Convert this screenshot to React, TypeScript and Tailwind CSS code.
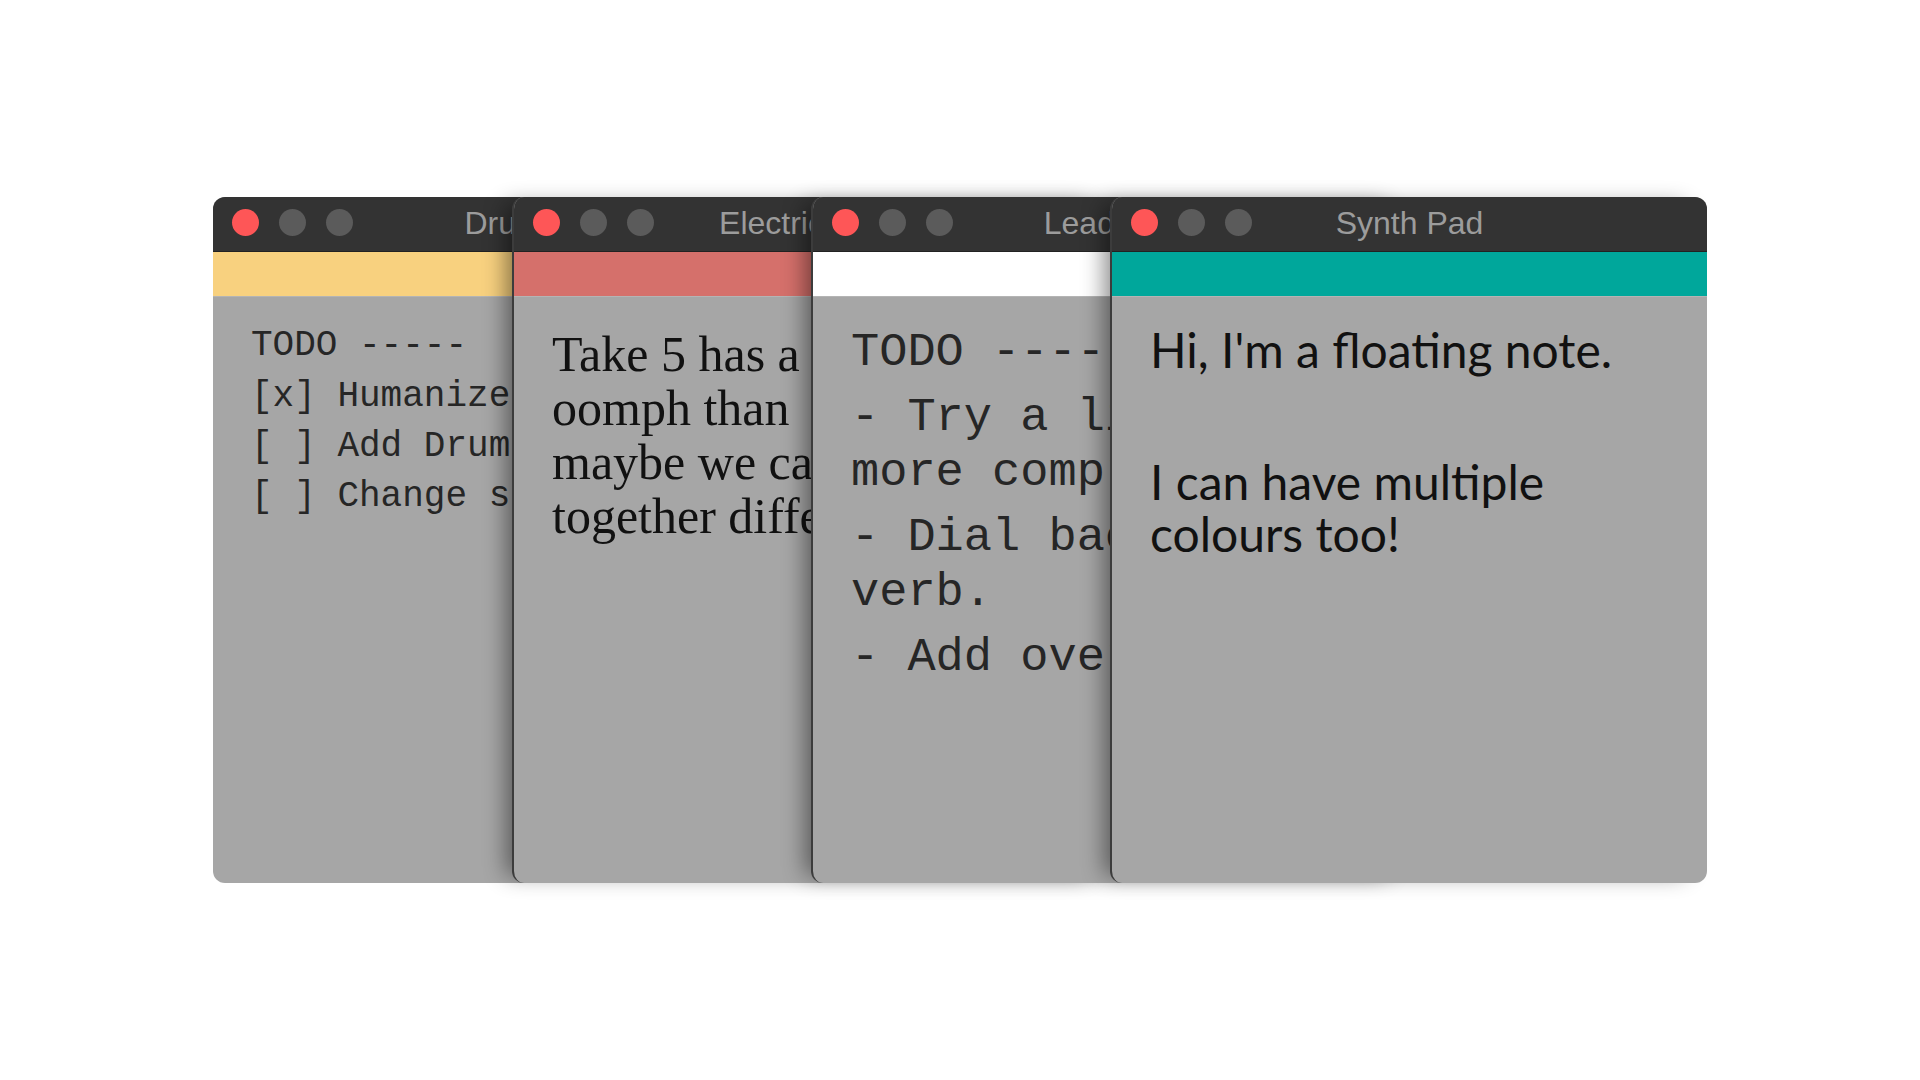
import React from 'react';

type NoteWindowProps = {
    title: string
    band: string
    first?: boolean
    bodyClass: string
    children: React.ReactNode
}

const NoteWindow = ({ title, band, first, bodyClass, children }: NoteWindowProps) => {
    return (
        <div
            className={`relative flex flex-col w-[597px] h-[686px] shrink-0 rounded-[12px] overflow-hidden bg-[#a6a6a6] ${first ? '' : '-ml-[298px] border-l-2 border-[#3c3c3c] shadow-[-14px_0_22px_-8px_rgba(0,0,0,0.45)]'}`}
        >
            {/* title bar */}
            <div className="grid grid-cols-[1fr_auto_1fr] items-center h-[55px] px-[19px] pb-[3px] bg-[#333333] border-b border-[#222]">
                <div className="flex items-center gap-[20px]">
                    <span className="w-[27px] h-[27px] rounded-full bg-[#fe5657]" />
                    <span className="w-[27px] h-[27px] rounded-full bg-[#5b5b5b]" />
                    <span className="w-[27px] h-[27px] rounded-full bg-[#5b5b5b]" />
                </div>
                <div className="text-[32px] leading-none text-[#9c9c9c] whitespace-nowrap font-['Liberation_Sans',Arial,sans-serif]">
                    {title}
                </div>
                <div />
            </div>
            <div className={`h-[45px] border-b border-[#b4b4b4] ${band}`} />
            <div className={`flex-1 pl-[38px] pr-[38px] ${bodyClass}`}>
                {children}
            </div>
        </div>
    )
}

const App = () => {
    return (
        <div className="w-screen h-screen bg-white flex items-center justify-center">
            <NoteWindow
                first
                title="Drums"
                band="bg-[#f8d17f]"
                bodyClass="pt-[24px] text-[#262626] font-['Liberation_Mono','Courier_New',monospace] text-[36px] leading-[50px] whitespace-pre"
            >
                <div>TODO -----</div>
                <div className="mt-[1px]">[x] Humanize the hi-hats</div>
                <div>[ ] Add Drum fills</div>
                <div>[ ] Change snare sample</div>
            </NoteWindow>
            <NoteWindow
                title="Electric Keys"
                band="bg-[#d5706b]"
                bodyClass="pt-[30px] text-[#111] font-['Liberation_Serif','Times_New_Roman',serif] text-[50px] leading-[54px]"
            >
                <p>Take 5 has a lot more oomph than{'\u00a0'} Take 4, maybe we can put together different bits.</p>
            </NoteWindow>
            <NoteWindow
                title="Lead Vox"
                band="bg-white"
                bodyClass="pt-[28px] text-[#262626] font-['Liberation_Mono','Courier_New',monospace] text-[47px] leading-[55px] whitespace-pre"
            >
                <div>TODO -----</div>
                <div className="mt-[10px]">- Try a little<br />more compression.</div>
                <div className="mt-[10px]">- Dial back the re-<br />verb.</div>
                <div className="mt-[10px]">- Add overdubs.</div>
            </NoteWindow>
            <NoteWindow
                title="Synth Pad"
                band="bg-[#00a79b]"
                bodyClass="pt-[27px] text-[#111] font-['Lato','Noto_Sans',sans-serif] text-[48px] leading-[52px]"
            >
                <p>Hi, I'm a floating note.</p>
                <p className="mt-[80px]">I can have multiple colours too!</p>
            </NoteWindow>
        </div>
    )
}

export default App
